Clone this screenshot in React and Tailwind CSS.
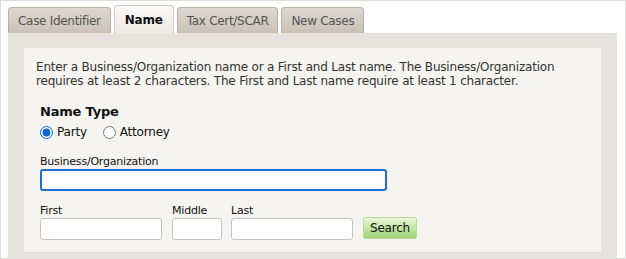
import React, { useState } from 'react'

const tabs = ['Case Identifier', 'Name', 'Tax Cert/SCAR', 'New Cases']

const TabButton = ({ label, active }) => {
  if (active) {
    return (
      <div className="relative z-10 -mb-px flex h-[29px] items-center rounded-t-[4px] border border-b-0 border-[#cfcac2] bg-gradient-to-b from-[#fbfaf8] to-[#ebe8e3] px-[10px] text-[12px] font-bold tracking-[-0.2px] text-[#111]">
        {label}
      </div>
    )
  }
  return (
    <div className="flex h-[26px] items-center rounded-t-[4px] border border-b-0 border-[#b9b1a4] bg-gradient-to-b from-[#dcd7cf] to-[#c9c2b6] px-[9px] text-[12px] tracking-[-0.3px] text-[#555]">
      {label}
    </div>
  )
}

const Field = ({ label, width, focused }) => (
  <label className="flex flex-col">
    <span className="mb-[1px] text-[11px] leading-[13px] tracking-[-0.2px] text-[#111]">{label}</span>
    <input
      className={
        focused
          ? `${width} h-[22px] rounded-[3px] border-2 border-[#1a6fd8] bg-white outline-none`
          : `${width} h-[22px] rounded-[3px] border border-[#c3c3c3] bg-white outline-none`
      }
    />
  </label>
)

const App = () => {
  const [nameType, setNameType] = useState('party')

  return (
    <div
      className="h-[259px] w-[626px] border border-[#dcdcdc] bg-white pl-[7px] pr-[8px] pt-[4px]"
      style={{ fontFamily: 'Verdana, "DejaVu Sans", sans-serif' }}
    >
      <div className="flex items-end gap-[3px]">
        {tabs.map((t) => (
          <TabButton key={t} label={t} active={t === 'Name'} />
        ))}
      </div>

      <div className="h-[225px] bg-[#e6e3de] px-[16px] pt-[15px]">
        <div className="h-[205px] border-b border-[#e0dcd5] bg-[#f5f4f0] px-[12px] pt-[12px]">
          <p className="text-[12px] leading-[14px] tracking-[-0.2px] text-[#333]">
            Enter a Business/Organization name or a First and Last name. The Business/Organization
            requires at least 2 characters. The First and Last name require at least 1 character.
          </p>

          <div className="mt-[16px] pl-[4px]">
            <div className="text-[13px] font-bold leading-[16px] tracking-[-0.2px] text-[#111]">Name Type</div>
            <div className="mt-[3px] flex items-center gap-[16px] text-[12px] tracking-[-0.2px] text-[#111]">
              <label className="flex items-center gap-[4px]">
                <input
                  type="radio"
                  name="nameType"
                  checked={nameType === 'party'}
                  onChange={() => setNameType('party')}
                  className="m-0 h-[13px] w-[13px] accent-[#0b63d6]"
                />
                Party
              </label>
              <label className="flex items-center gap-[4px]">
                <input
                  type="radio"
                  name="nameType"
                  checked={nameType === 'attorney'}
                  onChange={() => setNameType('attorney')}
                  className="m-0 h-[13px] w-[13px]"
                />
                Attorney
              </label>
            </div>

            <div className="mt-[14px]">
              <Field label="Business/Organization" width="w-[347px]" focused />
            </div>

            <div className="mt-[13px] flex items-end">
              <Field label="First" width="w-[122px]" />
              <div className="ml-[10px]">
                <Field label="Middle" width="w-[50px]" />
              </div>
              <div className="ml-[9px]">
                <Field label="Last" width="w-[122px]" />
              </div>
              <button className="mb-[1px] ml-[10px] h-[22px] w-[54px] rounded-[2px] border border-[#b7d99c] bg-gradient-to-b from-[#e6f7d6] to-[#9fd46f] text-[12px] tracking-[-0.2px] text-[#111]">
                Search
              </button>
            </div>
          </div>
        </div>
      </div>
    </div>
  )
}

export default App
